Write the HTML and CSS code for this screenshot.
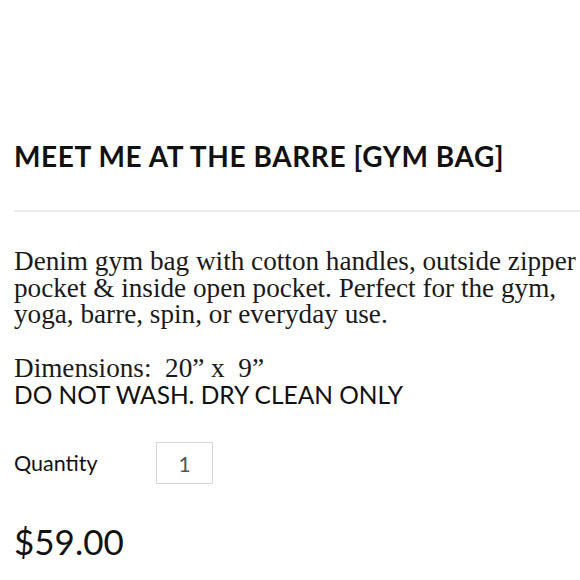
FILE: index.html
```html
<!DOCTYPE html>
<html>
<head>
<meta charset="utf-8">
<link rel="stylesheet" href="styles.css">
</head>
<body>
<main class="product">
  <h1 class="title">MEET ME AT THE BARRE [GYM BAG]</h1>
  <hr class="divider">
  <div class="desc">
    <p class="serif">Denim gym bag with cotton handles, outside zipper pocket &amp; inside open pocket. Perfect for the gym, yoga, barre, spin, or everyday use.</p>
    <p class="serif dims">Dimensions:&nbsp; 20” x&nbsp; 9”</p>
    <p class="care">DO NOT WASH. DRY CLEAN ONLY</p>
  </div>
  <div class="qty-row">
    <span class="qty-label">Quantity</span>
    <span class="qty-box">1</span>
  </div>
  <div class="price">$59.00</div>
</main>
</body>
</html>
```

FILE: styles.css
```css
html, body {
  margin: 0;
  padding: 0;
  background: #fff;
  overflow: hidden;
}
.product {
  padding: 138px 0 0 14px;
  width: 580px;
  box-sizing: border-box;
  color: #111;
}
.title {
  margin: 0;
  font-family: "Lato", sans-serif;
  font-weight: 700;
  font-size: 28px;
  letter-spacing: 0.6px;
  line-height: 36px;
  color: #111;
}
.divider {
  margin: 36px 0 0 0;
  border: none;
  border-top: 2px solid #ebebeb;
  height: 0;
}
.desc {
  margin-top: 36px;
}
.desc p {
  margin: 0;
}
.serif {
  font-family: "Liberation Serif", serif;
  font-size: 27.2px;
  line-height: 26.5px;
  color: #1a1a1a;
}
.dims {
  margin-top: 27px !important;
}
.care {
  font-family: "Lato", sans-serif;
  font-size: 24.5px;
  line-height: 27px;
  color: #111;
}
.qty-row {
  display: flex;
  align-items: center;
  margin-top: 34px;
}
.qty-label {
  font-family: "Lato", sans-serif;
  font-size: 21.5px;
  width: 142px;
  color: #111;
}
.qty-box {
  width: 55px;
  height: 40px;
  border: 1px solid #d6d6d6;
  display: flex;
  align-items: center;
  justify-content: center;
  font-family: "Lato", sans-serif;
  font-size: 21px;
  color: #555;
}
.price {
  margin-top: 36px;
  font-family: "Lato", sans-serif;
  font-size: 35px;
  color: #111;
}
```
